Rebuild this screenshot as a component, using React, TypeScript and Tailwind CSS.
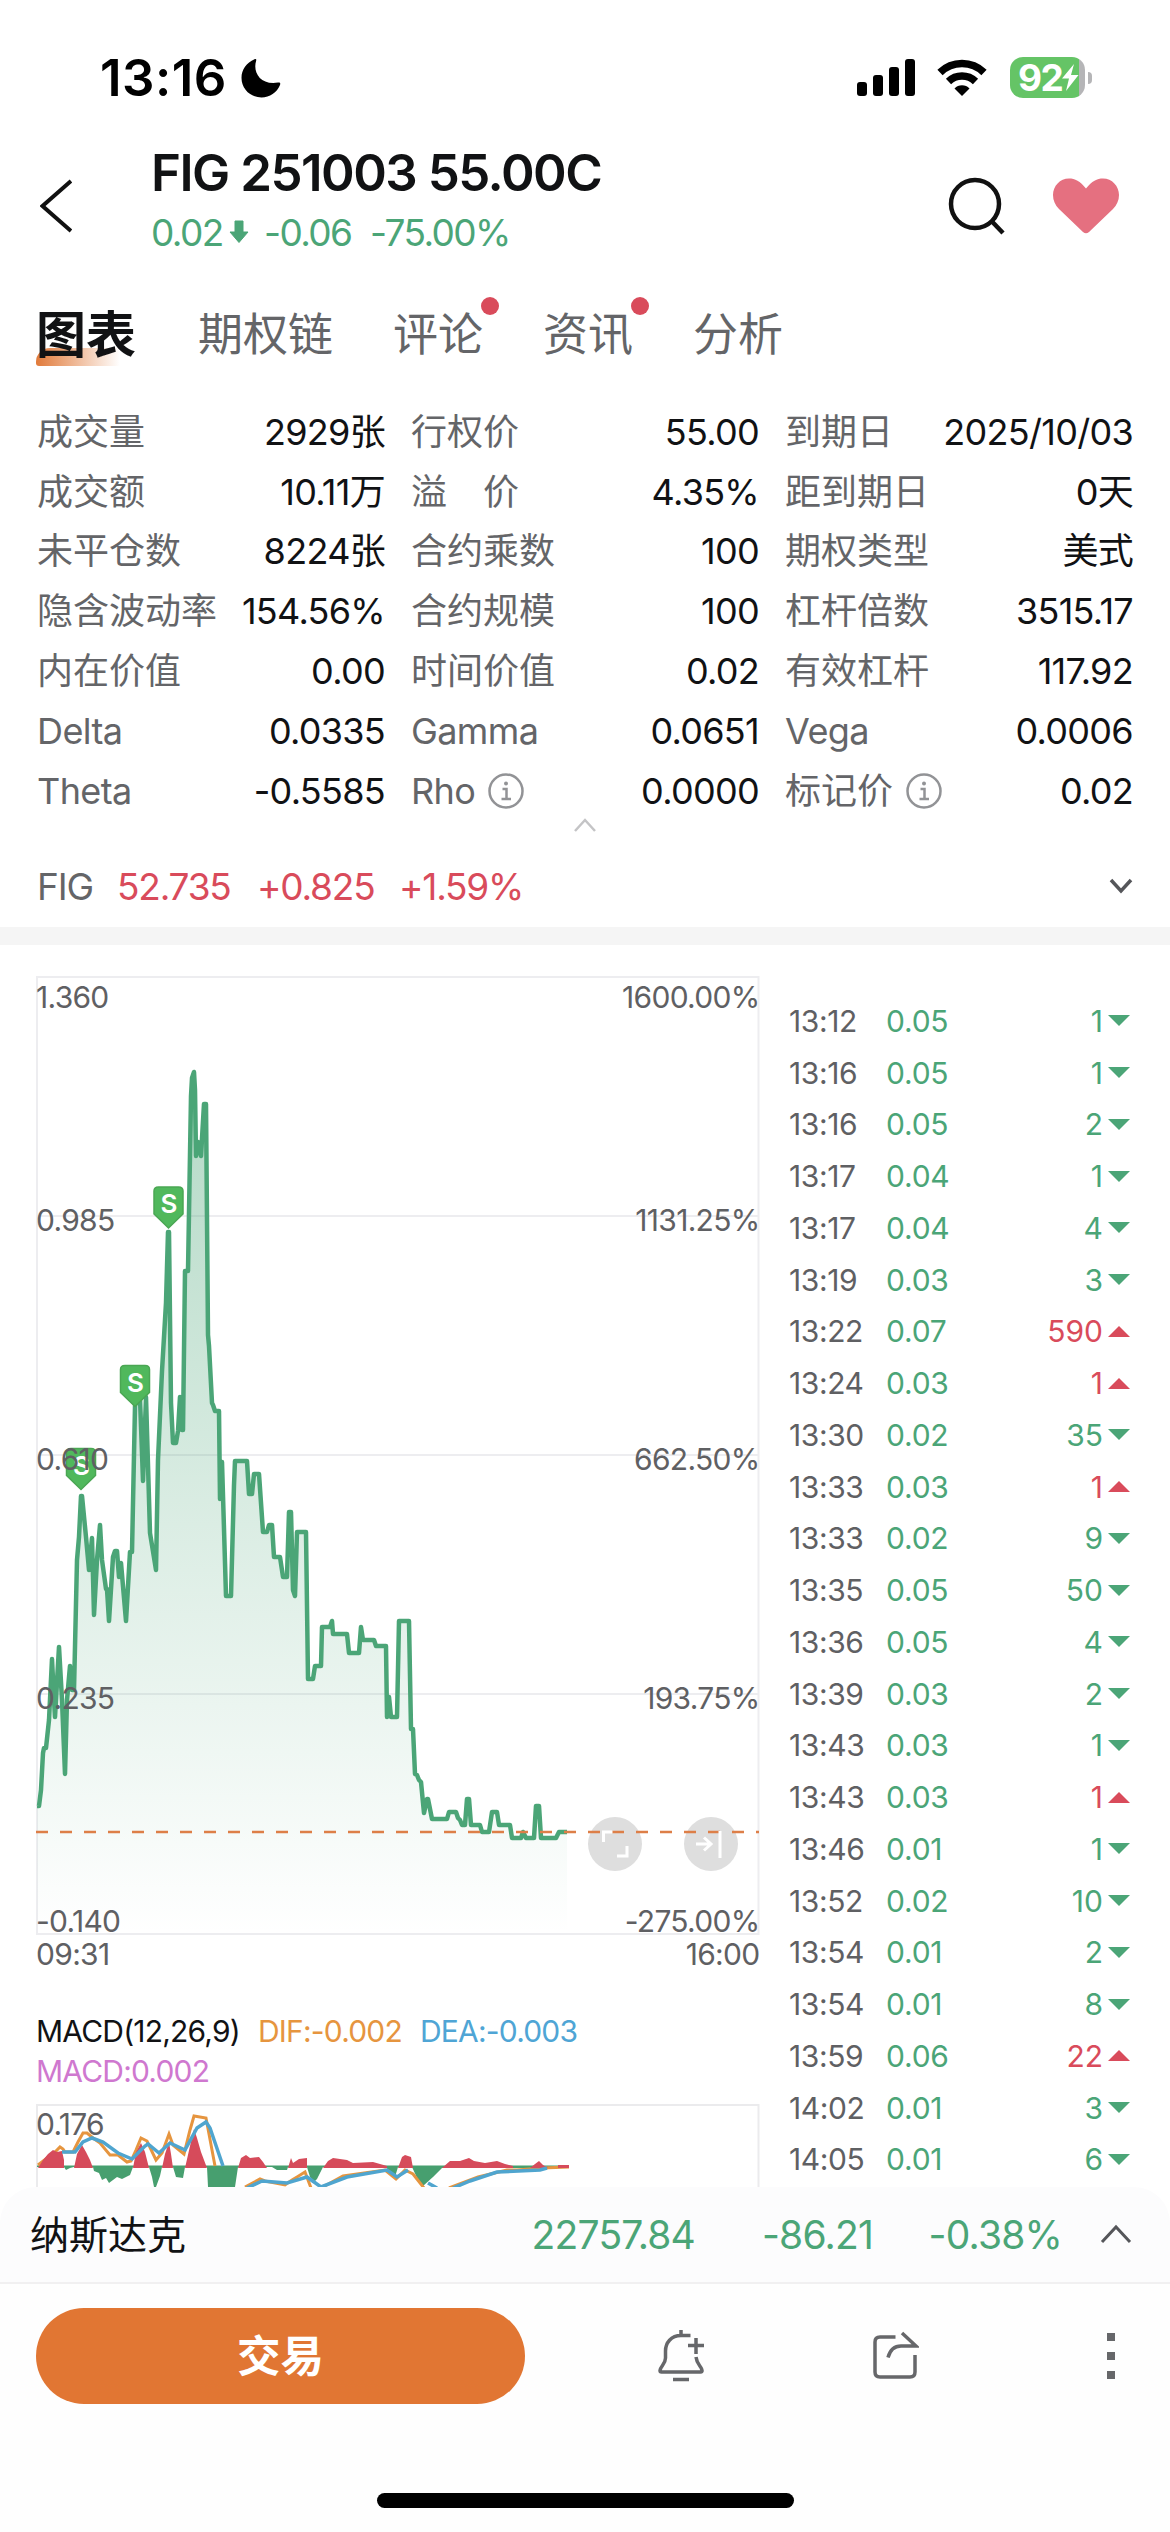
import clsx from "clsx";
import { ReactNode } from "react";

const GREEN = "#4ba577";
const RED = "#d94b5b";

const tabs = [
	{ label: "图表", active: true },
	{ label: "期权链" },
	{ label: "评论", dot: true },
	{ label: "资讯", dot: true },
	{ label: "分析" },
];

type Stat = { label: string; value: string; info?: boolean };

const stats: Stat[] = [
	{ label: "成交量", value: "2929张" },
	{ label: "行权价", value: "55.00" },
	{ label: "到期日", value: "2025/10/03" },
	{ label: "成交额", value: "10.11万" },
	{ label: "溢　价", value: "4.35%" },
	{ label: "距到期日", value: "0天" },
	{ label: "未平仓数", value: "8224张" },
	{ label: "合约乘数", value: "100" },
	{ label: "期权类型", value: "美式" },
	{ label: "隐含波动率", value: "154.56%" },
	{ label: "合约规模", value: "100" },
	{ label: "杠杆倍数", value: "3515.17" },
	{ label: "内在价值", value: "0.00" },
	{ label: "时间价值", value: "0.02" },
	{ label: "有效杠杆", value: "117.92" },
	{ label: "Delta", value: "0.0335" },
	{ label: "Gamma", value: "0.0651" },
	{ label: "Vega", value: "0.0006" },
	{ label: "Theta", value: "-0.5585" },
	{ label: "Rho", value: "0.0000", info: true },
	{ label: "标记价", value: "0.02", info: true },
];

type Tick = [time: string, price: string, volume: number, side: "up" | "down"];

const ticks: Tick[] = [
	["13:12", "0.05", 1, "down"],
	["13:16", "0.05", 1, "down"],
	["13:16", "0.05", 2, "down"],
	["13:17", "0.04", 1, "down"],
	["13:17", "0.04", 4, "down"],
	["13:19", "0.03", 3, "down"],
	["13:22", "0.07", 590, "up"],
	["13:24", "0.03", 1, "up"],
	["13:30", "0.02", 35, "down"],
	["13:33", "0.03", 1, "up"],
	["13:33", "0.02", 9, "down"],
	["13:35", "0.05", 50, "down"],
	["13:36", "0.05", 4, "down"],
	["13:39", "0.03", 2, "down"],
	["13:43", "0.03", 1, "down"],
	["13:43", "0.03", 1, "up"],
	["13:46", "0.01", 1, "down"],
	["13:52", "0.02", 10, "down"],
	["13:54", "0.01", 2, "down"],
	["13:54", "0.01", 8, "down"],
	["13:59", "0.06", 22, "up"],
	["14:02", "0.01", 3, "down"],
	["14:05", "0.01", 6, "down"],
];

const pricePoints =
	"37,1806 39,1806 41,1790 43,1753 44,1748 46,1748 49,1720 52,1659 54,1700 55,1717 59,1647 62,1700 65,1774 67,1700 70,1666 72,1690 74,1690 77,1560 79,1537 81,1496 82,1496 86,1537 89,1570 92,1538 94,1615 97,1560 100,1525 102,1560 106,1589 107,1589 109,1621 113,1557 115,1551 117,1551 119,1577 121,1563 126,1621 130,1552 132,1552 135,1406 137,1398 140,1398 143,1481 146,1397 150,1533 156,1570 158,1460 162,1371 166,1303 168,1232 169,1232 171,1403 173,1443 176,1443 178,1431 180,1397 182,1430 183,1430 185,1271 188,1271 191,1096 192,1078 194,1072 195,1090 196,1156 198,1142 201,1156 204,1104 206,1104 208,1335 209,1346 212,1403 213,1405 215,1411 219,1411 220,1499 222,1462 226,1596 231,1596 234,1485 235,1461 247,1461 249,1494 252,1494 254,1474 259,1474 263,1532 267,1532 269,1525 272,1525 274,1557 280,1557 283,1577 287,1577 289,1512 291,1512 293,1590 295,1596 297,1532 306,1532 308,1679 313,1679 315,1666 321,1666 322,1627 330,1627 332,1621 333,1634 347,1634 349,1653 359,1653 361,1627 363,1640 374,1640 376,1646 386,1646 387,1717 389,1697 391,1717 397,1717 399,1621 409,1621 411,1729 413,1729 415,1774 417,1775 419,1780 421,1782 424,1813 427,1799 428,1799 432,1819 447,1819 449,1812 456,1812 458,1818 460,1820 462,1825 465,1825 467,1799 469,1799 471,1825 480,1825 482,1832 489,1832 492,1812 497,1812 499,1825 510,1825 512,1838 521,1838 523,1832 526,1838 534,1838 536,1806 539,1806 541,1838 556,1838 559,1832 567,1832";

const axis = [
	{ y: 1008, price: "1.360", change: "1600.00%" },
	{ y: 1231, price: "0.985", change: "1131.25%" },
	{ y: 1470, price: "0.610", change: "662.50%" },
	{ y: 1709, price: "0.235", change: "193.75%" },
	{ y: 1932, price: "-0.140", change: "-275.00%" },
];

const sells = [
	[168.5, 1186],
	[135, 1364.5],
	[81, 1447.5],
];

const macdUp =
	"M38 2168L43 2160L48 2154L53 2150L57 2152L62 2151L64 2160V2168ZM74 2168L77 2154L82 2145L86 2152L90 2160L93 2168ZM133 2168L136 2152L141 2143L145 2152L149 2168ZM162 2168L165 2154L169 2142L171 2154L173 2168ZM185 2168L190 2146L194 2129L197 2138L201 2152L207 2168ZM238 2168L241 2158L246 2155L250 2158L259 2157L263 2162L267 2168ZM288 2168L291 2158L293 2163L299 2159L307 2158V2168ZM323 2168L328 2161L333 2158L347 2160L353 2163L373 2162L387 2166V2168ZM398 2168L402 2157L405 2155L411 2157L413 2168ZM442 2168L450 2161L460 2161L469 2158L474 2161L485 2163L497 2161L505 2164L513 2166V2168ZM530 2168L535 2164L539 2161L543 2165L548 2168ZM558 2168V2165H569V2168Z";

const macdDown =
	"M37 2165.500H569V2168H442L433 2177L423 2186L418 2180L412 2167H398L395 2177L392 2177L386 2167H323L317 2179L314 2182L310 2177L307 2167H288L287 2170H277L272 2167H238L235 2187H208L207 2167H185L183 2178L176 2177L173 2167H162L160 2176L156 2187H154L152 2177L149 2167H133L130 2175L122 2179L117 2177L109 2183L106 2178L102 2180L99 2173L94 2171L93 2167H74L70 2168L66 2170L64 2167H37Z";

const difLines = [
	"38,2165 55,2152 60,2147 63,2149 65,2152 73,2152 78,2142 83,2133 87,2133 93,2138 100,2143 110,2155 118,2155 127,2162 131,2161 136,2150 141,2138 147,2141 156,2160 162,2153 169,2134 173,2145 184,2154 190,2130 194,2116 206,2118 215,2166",
	"245,2187 260,2179 265,2181 285,2185 292,2180 297,2177 305,2172 311,2188",
	"321,2188 343,2176 385,2170 396,2179 405,2170 413,2174 424,2188",
	"449,2188 478,2177 507,2170 517,2170 542,2168 569,2167",
];

const deaLines = [
	"62,2152 75,2152 83,2142 92,2138 103,2142 118,2153 132,2159 145,2146 148,2144 159,2153 170,2143 185,2150 197,2128 206,2122 210,2128 223,2166",
	"247,2188 262,2181 287,2183 307,2177 321,2187 347,2177 387,2170 397,2177 408,2170",
	"428,2183 437,2188",
	"453,2188 470,2181 497,2172 540,2170 547,2168",
];

const Icon = ({
	className,
	viewBox,
	children,
}: {
	className: string;
	viewBox: string;
	children: ReactNode;
}) => (
	<svg className={clsx("shrink-0", className)} viewBox={viewBox} fill="none">
		{children}
	</svg>
);

const StatusBar = () => (
	<div className="h-[141px] pt-[14px] pl-[100px] pr-[78px] flex items-center justify-between text-black">
		<div className="flex items-center">
			<span className="w-[141px] text-[51px] leading-none font-semibold tracking-[0.5px]">
				13:16
			</span>
			<Icon className="w-10 h-10" viewBox="0 0 40 40">
				<path
					d="M13.5 1.2C14.6.6 15.6 1 15.2 2.4C11.500 14 19 27.500 37 24.600C38.800 24.200 39.800 25.200 39 27C35.800 34.600 28.800 39.500 20.500 39.500C9.500 39.500.500 31 .500 19.800C.500 11.500 5.500 4.500 13.500 1.200Z"
					fill="#000"
				/>
			</Icon>
		</div>
		<div className="flex items-center">
			<Icon className="w-[58px] h-[38px] mr-[22px]" viewBox="0 0 58 38">
				<rect x="0" y="23" width="10" height="14" rx="3" fill="#000" />
				<rect x="16" y="16" width="10" height="21" rx="3" fill="#000" />
				<rect x="32" y="8" width="10" height="29" rx="3" fill="#000" />
				<rect x="48" y="0" width="10" height="37" rx="3" fill="#000" />
			</Icon>
			<Icon className="w-[50px] h-[38px] mr-[23px]" viewBox="0 0 50 38">
				<path d="M3 13.500A31.500 31.500 0 0 1 47 13.500" stroke="#000" strokeWidth="7.500" />
				<path d="M11.500 22.500A19.500 19.500 0 0 1 38.500 22.500" stroke="#000" strokeWidth="7.500" />
				<path d="M25 37L17.500 29.500A10.500 10.500 0 0 1 32.500 29.500Z" fill="#000" />
			</Icon>
			<div className="w-[75px] h-[41px] pl-[8px] flex items-center rounded-[13px] bg-[linear-gradient(to_right,#65c466_69px,#b5b5b7_69px)]">
				<span className="w-[43px] text-white text-[37px] leading-[41px] font-bold tracking-[-1.5px]">
					92
				</span>
				<Icon className="w-[18px] h-[29px]" viewBox="0 0 18 29">
					<path d="M13 1L1 15.500H8L5 28L17.500 12H10Z" fill="#fff" />
				</Icon>
			</div>
			<div className="ml-[3px] w-1 h-3 rounded-r-full bg-[#b5b5b7]" />
		</div>
	</div>
);

const Header = () => (
	<div className="h-[129px] pl-[40px] pr-[50px] flex items-center">
		<Icon className="w-8 h-[54px] mr-[79px]" viewBox="0 0 32 54">
			<path d="M31 2L2.500 27L31 52" stroke="#111" strokeWidth="4" />
		</Icon>
		<div className="flex-1 flex flex-col pb-[10px]">
			<h1 className="h-[63px] flex items-center text-[51px] leading-none font-semibold text-[#111214] tracking-[-1.5px]">
				FIG 251003 55.00C
			</h1>
			<div className="h-[56px] flex items-center text-[37px] leading-none text-[#4ba577] tracking-[-1.6px]">
				<span className="w-[78px]">0.02</span>
				<Icon className="w-5 h-6 mr-[15px]" viewBox="0 0 20 24">
					<path d="M6 1H14V12H19L10 22.500L1 12H6Z" fill={GREEN} stroke={GREEN} strokeLinejoin="round" />
				</Icon>
				<span className="w-[106px]">-0.06</span>
				<span>-75.00%</span>
			</div>
		</div>
		<Icon className="w-[60px] h-[60px] mr-[45px]" viewBox="0 0 60 60">
			<circle cx="28" cy="28" r="24" stroke="#111" strokeWidth="4.500" />
			<path d="M44.500 45L56 57" stroke="#111" strokeWidth="4.500" />
		</Icon>
		<Icon className="w-[68px] h-[56px]" viewBox="0 0 68 56">
			<path
				d="M34 10.500C40 3 45 .500 51 .500C60 .500 67 8 67 17C67 22.500 64.800 27 61 31L37 54Q34 56.500 31 54L7 31C3.200 27 1 22.500 1 17C1 8 8 .500 17 .500C23 .500 28 3 34 10.500Z"
				fill="#e57080"
			/>
		</Icon>
	</div>
);

const Tabs = () => (
	<div className="h-[129px] pl-[36px] flex items-center text-[45px] leading-none text-[#646568]">
		{tabs.map((tab) => (
			<div
				key={tab.label}
				className={clsx(
					"relative",
					tab.active ? "mr-[62px] text-[50px] font-bold text-[#111214]" : "mr-[60px]",
				)}
			>
				{tab.active && (
					<div className="absolute left-0 -bottom-[6px] w-[84px] h-[18px] rounded-tl-[14px] rounded-bl-[3px] bg-linear-to-r from-[#e17a3a] to-[#e17a3a]/0" />
				)}
				<span className="relative">{tab.label}</span>
				{tab.dot && (
					<div className="absolute -right-[16px] -top-[15px] w-[18px] h-[18px] rounded-full bg-[#d94b5b]" />
				)}
			</div>
		))}
	</div>
);

const InfoIcon = () => (
	<Icon className="w-9 h-9 ml-[13px]" viewBox="0 0 36 36">
		<circle cx="18" cy="18" r="16.500" stroke="#929396" strokeWidth="2.500" />
		<circle cx="18" cy="10.500" r="2" fill="#929396" />
		<path d="M14.500 16H18.500V26M13.500 26H23" stroke="#929396" strokeWidth="2.500" />
	</Icon>
);

const StatsGrid = () => (
	<div className="px-[37px] pt-[3px] grid grid-cols-3 gap-x-[26px] text-[36px] leading-none">
		{stats.map((stat) => (
			<div key={stat.label} className="h-[59.8px] flex items-center justify-between">
				<div
					className={clsx(
						"flex items-center text-[#646568] whitespace-nowrap",
						/^[A-Z]/.test(stat.label) && "tracking-[-0.6px]",
					)}
				>
					{stat.label}
					{stat.info && <InfoIcon />}
				</div>
				<div className="text-[#111214] whitespace-nowrap tracking-[-0.7px]">{stat.value}</div>
			</div>
		))}
	</div>
);

const Underlying = () => (
	<div className="h-[106.4px]">
		<div className="h-[14px] flex justify-center">
			<Icon className="w-[22px] h-[14px] mt-[-3px]" viewBox="0 0 22 14">
				<path d="M1 13L11 2L21 13" stroke="#c4c4c6" strokeWidth="2.500" />
			</Icon>
		</div>
		<div className="h-[92px] pt-[11px] px-[37px] flex items-center text-[37px] leading-none text-[#d94b5b] tracking-[-1.2px]">
			<span className="text-[#646568] w-[80px]">FIG</span>
			<span className="w-[140px]">52.735</span>
			<span className="w-[142px]">+0.825</span>
			<span className="flex-1">+1.59%</span>
			<Icon className="w-6 h-4" viewBox="0 0 24 16">
				<path d="M2 2L12 13L22 2" stroke="#55565a" strokeWidth="3.500" />
			</Icon>
		</div>
	</div>
);

const PriceChart = () => (
	<svg
		className="w-[770px] h-[1027px] block"
		viewBox="0 948 770 1027"
		fontSize="30"
		letterSpacing="-0.7"
		fill="#5f6063"
	>
		<defs>
			<linearGradient id="area" gradientUnits="userSpaceOnUse" x1="0" y1="1072" x2="0" y2="1934">
				<stop offset="0" stopColor={GREEN} stopOpacity="0.42" />
				<stop offset="1" stopColor={GREEN} stopOpacity="0" />
			</linearGradient>
		</defs>
		<path
			d="M37 977H758.500V1934H37ZM37 1216H758M37 1455H758M37 1694H758"
			fill="none"
			stroke="#ededf0"
			strokeWidth="2"
		/>
		<polygon points={`37,1934 ${pricePoints} 567,1934`} fill="url(#area)" />
		<polyline
			points={pricePoints}
			fill="none"
			stroke={GREEN}
			strokeWidth="4.500"
			strokeLinejoin="round"
		/>
		<circle cx="615" cy="1844" r="27" fill="#dedede" />
		<circle cx="711" cy="1844" r="27" fill="#dedede" />
		<path d="M36 1832H759" stroke="#dd7f48" strokeWidth="2.500" strokeDasharray="12 12" />
		<path
			d="M603.500 1842V1832H612.500M627 1846V1856H617M696 1844H711M704 1837.500L711 1844L704 1850.500M720 1831V1858"
			fill="none"
			stroke="#fff"
			strokeWidth="3"
		/>
		{sells.map(([x, y]) => (
			<g key={x} transform={`translate(${x} ${y})`}>
				<path
					d="M-10 1H10Q14.500 1 14.500 5V28L0 42L-14.500 28V5Q-14.500 1 -10 1Z"
					fill="#50b85c"
					stroke="#4aa653"
					strokeWidth="1.500"
				/>
				<text y="27" textAnchor="middle" fontSize="26" fontWeight="600" fill="#fff">
					S
				</text>
			</g>
		))}
		{axis.map(({ y, price, change }) => (
			<g key={y}>
				<text x="36" y={y}>{price}</text>
				<text x="759.500" y={y} textAnchor="end">{change}</text>
			</g>
		))}
		<text x="36" y="1965">09:31</text>
		<text x="759.500" y="1965" textAnchor="end">16:00</text>
	</svg>
);

const Macd = () => (
	<div>
		<div className="h-[129px] pt-[36px] pl-[36px] text-[30px] leading-[40px] tracking-[-0.8px]">
			<div className="flex gap-[18px]">
				<span className="text-[#111214]">MACD(12,26,9)</span>
				<span className="text-[#e6953f]">DIF:-0.002</span>
				<span className="text-[#4fa5d5]">DEA:-0.003</span>
			</div>
			<div className="text-[#cf78cf]">MACD:0.002</div>
		</div>
		<svg className="w-[770px] h-[83px] block" viewBox="0 2104 770 83" fill="none">
			<path d="M37 2190V2105H758.500V2190" stroke="#ebebed" strokeWidth="2" />
			<text x="36" y="2135" fontSize="30" letterSpacing="-0.7" fill="#5f6063">0.176</text>
			<path d={macdDown} fill="#479f6f" />
			{difLines.map((points) => (
				<polyline key={points} points={points} stroke="#e6953f" strokeWidth="3" />
			))}
			<path d={macdUp} fill="#d64b5b" />
			{deaLines.map((points) => (
				<polyline key={points} points={points} stroke="#4fa5cf" strokeWidth="3.500" />
			))}
		</svg>
	</div>
);

const TickList = () => (
	<div className="w-[400px] pt-[47px] pl-[19px] pr-[40px] text-[30px] leading-none">
		{ticks.map(([time, price, volume, side], i) => (
			<div key={i} className="h-[51.75px] flex items-center">
				<span className="w-[97px] text-[#5f6063] tracking-[-0.4px]">{time}</span>
				<span className="flex-1 text-[#4ba577] tracking-[-0.2px]">{price}</span>
				<span className={side === "up" ? "text-[#d94b5b]" : "text-[#4ba577]"}>{volume}</span>
				<Icon className="w-[22px] h-[11px] ml-[5px]" viewBox="0 0 22 11">
					{side === "up" ? (
						<path d="M0 11H22L11 0Z" fill={RED} />
					) : (
						<path d="M0 0H22L11 11Z" fill={GREEN} />
					)}
				</Icon>
			</div>
		))}
	</div>
);

const IndexBar = () => (
	<div className="h-[97px] pl-[30px] pr-[38px] flex items-center bg-[#fcfcfd] rounded-t-[36px] border-b-2 border-[#f1f0f1] text-[39px] leading-none text-[#4ba577] tracking-[-0.8px]">
		<span className="flex-1 text-[#111214] tracking-normal">纳斯达克</span>
		<span className="w-[164px] text-right">22757.84</span>
		<span className="w-[178px] text-right">-86.21</span>
		<span className="w-[189px] text-right">-0.38%</span>
		<Icon className="w-8 h-5 ml-[38px]" viewBox="0 0 32 20">
			<path d="M2 18L16 3L30 18" stroke="#55565a" strokeWidth="3" />
		</Icon>
	</div>
);

const ActionBar = () => (
	<div className="h-[248px] flex flex-col items-center bg-[#fefefe]">
		<div className="w-full h-[144px] pl-[36px] pr-[51px] flex items-center">
			<button className="w-[489px] h-[96px] pt-[2px] rounded-full bg-[#e17633] text-white text-[43.5px] leading-none font-bold">
				交易
			</button>
			<Icon className="w-[48px] h-[54px] ml-[132px]" viewBox="0 0 48 54">
				<path
					d="M33.500 6.500H24C14 6.500 8.500 14 8.500 22V29C8.500 35 3.500 37 3 41.500Q3 43 4.500 43H43.500Q45.500 43 45 41C44 36.500 40 36 39 28M24 7V1M16 50.500H32M39 9V25M31 16.500H47"
					stroke="#66676a"
					strokeWidth="3.500"
				/>
			</Icon>
			<Icon className="w-[48px] h-[50px] ml-[166px]" viewBox="0 0 48 50">
				<path
					d="M24.500 6H9Q4 6 4 11V41Q4 46 9 46H39Q44 46 44 41V24M17 26.500C19 19 23 15 30 15H45L31 2"
					stroke="#66676a"
					strokeWidth="3.500"
				/>
			</Icon>
			<div className="flex-1 flex flex-col items-end gap-[11px] pr-[4px]">
				<div className="w-2 h-2 bg-[#66676a]" />
				<div className="w-2 h-2 bg-[#66676a]" />
				<div className="w-2 h-2 bg-[#66676a]" />
			</div>
		</div>
		<div className="mt-[65px] w-[417px] h-[15px] rounded-full bg-black" />
	</div>
);

const App = () => {
	return (
		<div className="w-[1170px] h-[2532px] overflow-hidden flex flex-col bg-white font-['Inter','Noto_Sans_CJK_SC',sans-serif]">
			<StatusBar />
			<Header />
			<Tabs />
			<StatsGrid />
			<Underlying />
			<div className="h-[18px] mb-[3px] bg-[#f5f5f5]" />
			<div className="h-[1239px] flex overflow-hidden">
				<div className="w-[770px] flex flex-col">
					<PriceChart />
					<Macd />
				</div>
				<TickList />
			</div>
			<IndexBar />
			<ActionBar />
		</div>
	);
};

export default App;
